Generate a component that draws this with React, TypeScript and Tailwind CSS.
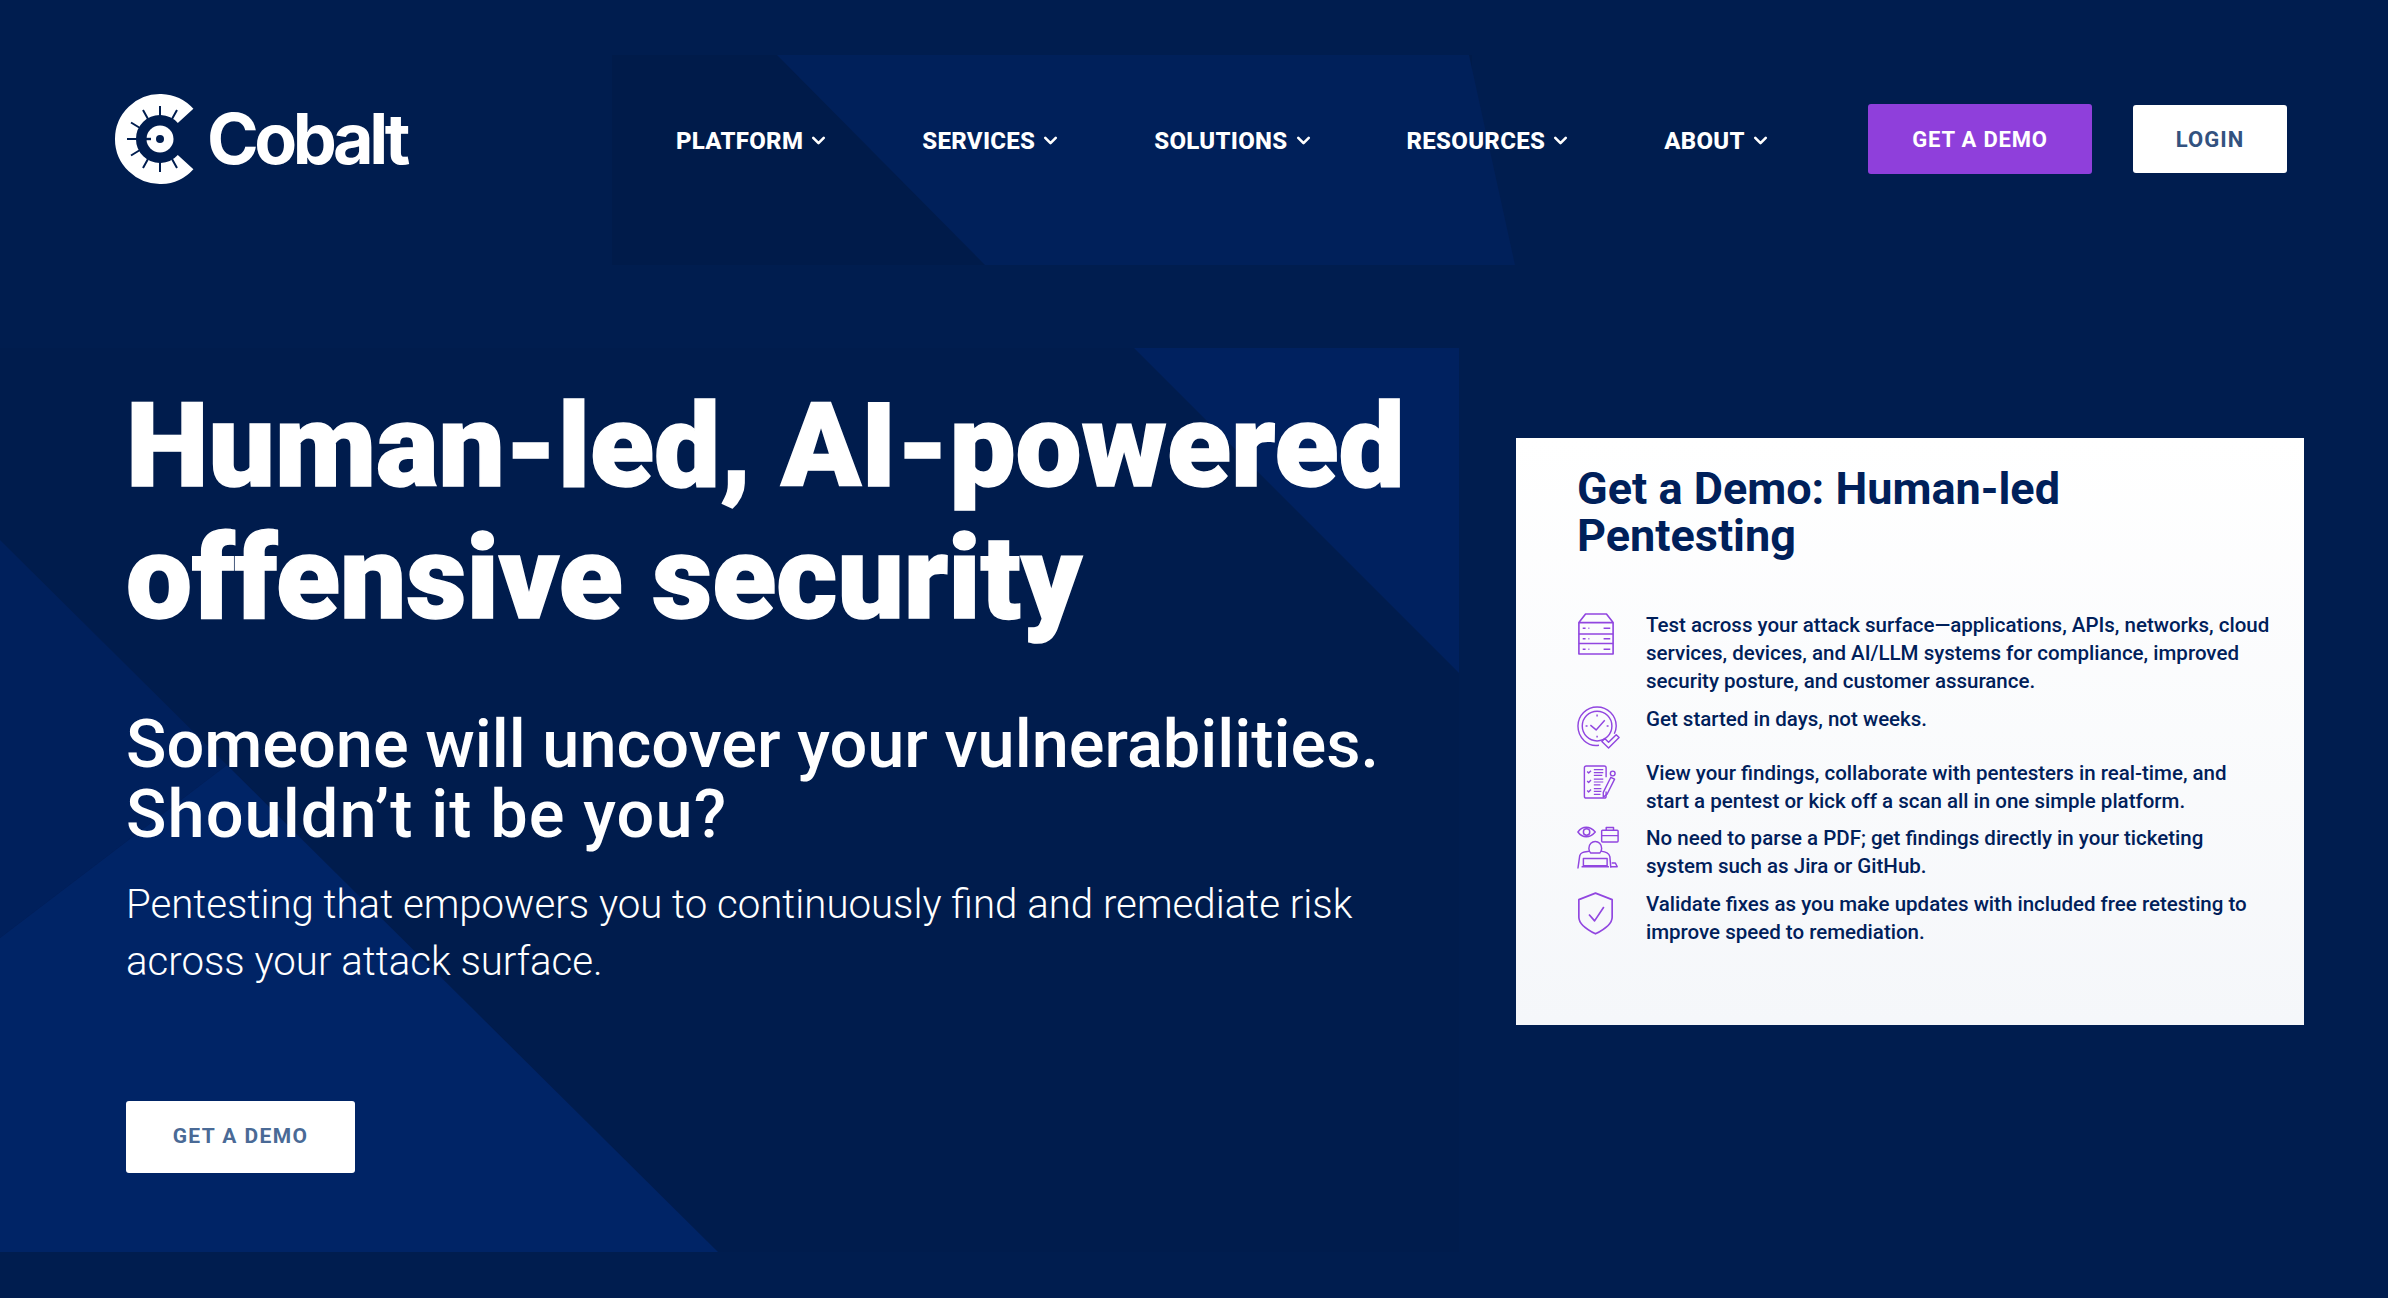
import { ChevronDown } from "lucide-react";

const navItems = ["PLATFORM", "SERVICES", "SOLUTIONS", "RESOURCES", "ABOUT"];

const Logo = () => (
  <svg width="92" height="92" viewBox="0 0 92 92" className="shrink-0">
    <path d="M71.600 22.900A34.500 34.500 0 1 0 71.600 69.100" fill="none" stroke="#fff" strokeWidth="21" />
    <path
      d="M46 24V13M58 26L63 17M34 26L29 17M26 35L17 29.500M24 46H13M26 57L17 62.500M34 66L29 75M46 68V79M58 66L63 75"
      stroke="#001d4f"
      strokeWidth="2"
    />
    <circle cx="46" cy="46" r="13.500" fill="#fff" />
    <circle cx="46" cy="46" r="4" fill="#001d4f" />
    <path d="M32 46H37" stroke="#001d4f" strokeWidth="2.400" />
  </svg>
);

const ServerIcon = () => (
  <svg width="38" height="44" viewBox="0 0 40 46" fill="none" stroke="#9146e0" strokeWidth="1.700" strokeLinejoin="round">
    <path d="M2 11L9 2H31L38 11V44H2Z" />
    <path d="M2 11H38M2 23H38M2 33H38" />
    <path d="M6 17H9M12 17H13M6 28H9M12 28H13M6 39H9M12 39H13M28 17H35M28 28H35M28 39H35" />
  </svg>
);

const ClockIcon = () => (
  <svg width="44" height="44" viewBox="0 0 46 46" fill="none" stroke="#9146e0" strokeWidth="1.500" strokeLinejoin="round">
    <path d="M23 41C11 43 1 33 1 21A20 20 0 0 1 41 21C41 24 40 27 39 29" />
    <circle cx="21" cy="21" r="15.500" />
    <path d="M21 9V11M21 31V33M9 21H11M31 21H33M14 20L20 25L29 15" />
    <path d="M26 37L29 34L33 38L41 30L44 33L33 44Z" />
  </svg>
);

const ChecklistIcon = () => (
  <svg width="33" height="34" viewBox="0 0 34 36" fill="none" stroke="#9146e0" strokeWidth="1.500" strokeLinejoin="round">
    <path d="M24 13V3A2 2 0 0 0 22 1H3A2 2 0 0 0 1 3V33A2 2 0 0 0 3 35H22A2 2 0 0 0 24 33V28" />
    <path d="M4 7L5.500 8.500L8 6M4 17L5.500 18.500L8 16M4 27L5.500 28.500L8 26" />
    <path d="M11 5H21M11 8H21M11 11H20M11 15H21M11 18H21M11 21H18M11 25H19M11 28H19M11 31H18" strokeWidth="1.300" />
    <path d="M21 29L29 13L33 15L25 31L21 34Z" />
    <circle cx="31" cy="9" r="2.500" />
  </svg>
);

const AnalystIcon = () => (
  <svg width="42" height="45" viewBox="0 0 46 48" fill="none" stroke="#9146e0" strokeWidth="1.600" strokeLinejoin="round">
    <path d="M1 7C6 0 14 0 20 7C14 14 6 14 1 7Z" />
    <circle cx="10.500" cy="7" r="3.500" />
    <rect x="27" y="5" width="18" height="13" rx="1" />
    <path d="M32 5V2H40V5M27 11H45" />
    <path d="M13 25C13 15 27 15 27 25C27 28 26 29 25 30H15C14 29 13 28 13 25Z" />
    <path d="M1 47L3 33C4 29 8 29 14 28M26 28C32 29 35 30 36 34L37 46" />
    <path d="M7 36H33V44H7ZM5 45H35" />
    <path d="M37 45H44L42 41H38" />
  </svg>
);

const ShieldIcon = () => (
  <svg width="37" height="43" viewBox="0 0 40 46" fill="none" stroke="#9146e0" strokeWidth="1.800" strokeLinejoin="round">
    <path d="M20 1L38 8V27C38 35 28 41 20 45C12 41 2 35 2 27V8Z" />
    <path d="M13 24L19 31L29 16" />
  </svg>
);

const features = [
  { icon: <ServerIcon />, iconClass: "pt-[1px]", boxClass: "h-[94px]", text: "Test across your attack surface\u2014applications, APIs, networks, cloud services, devices, and AI/LLM systems for compliance, improved security posture, and customer assurance." },
  { icon: <ClockIcon />, iconClass: "pt-[1px]", boxClass: "h-[54px]", text: "Get started in days, not weeks." },
  { icon: <ChecklistIcon />, iconClass: "pt-[6px] pl-[6px]", boxClass: "h-[65px]", text: "View your findings, collaborate with pentesters in real-time, and start a pentest or kick off a scan all in one simple platform." },
  { icon: <AnalystIcon />, iconClass: "pt-[1px]", boxClass: "h-[66px]", text: "No need to parse a PDF; get findings directly in your ticketing system such as Jira or GitHub." },
  { icon: <ShieldIcon />, iconClass: "pt-[2px]", boxClass: "h-[56px]", text: "Validate fixes as you make updates with included free retesting to improve speed to remediation." },
];

const Background = () => (
  <div className="absolute inset-0 overflow-hidden">
    <svg width="2388" height="1298" viewBox="0 0 2388 1298">
      <rect x="612" y="55" width="860" height="210" fill="#001b4a" />
      <path d="M777 55H1469L1515 265H985Z" fill="#00205a" />
      <path d="M0 348H1459V1252H0Z" fill="#001c4d" />
      <path d="M1134 348H1459V673Z" fill="#00215f" />
      <path d="M0 540L227 765L0 938Z" fill="#00205c" />
      <path d="M0 938L227 765L718 1252H0Z" fill="#002466" />
    </svg>
  </div>
);

export default function App() {
  return (
    <div className="relative h-[1298px] w-[2388px] overflow-hidden bg-[#001d4f] font-['Roboto',sans-serif]">
      <Background />
      <div className="relative">
        <header className="flex h-[278px] items-center pl-[114px] pr-[101px]">
          <div className="flex w-[562px] items-center gap-[1px]">
            <Logo />
            <span className="font-['Inter',sans-serif] text-[70px] font-bold leading-none tracking-[-4.500px] text-white">Cobalt</span>
          </div>
          <nav className="mt-[3px] flex flex-1 items-center gap-[93px]">
            {navItems.map((item) => (
              <a key={item} className="flex items-center gap-[5px] text-[24px] font-extrabold tracking-[0.300px] text-white">
                {item}
                <ChevronDown size={21} strokeWidth={3} />
              </a>
            ))}
          </nav>
          <button className="flex h-[70px] w-[224px] items-center justify-center rounded-[3px] bg-[#8f3fdb] text-[22px] font-bold tracking-[0.800px] text-white">GET A DEMO</button>
          <button className="ml-[41px] flex h-[68px] w-[154px] items-center justify-center rounded-[3px] bg-white text-[22px] font-bold tracking-[1px] text-[#33527f]">LOGIN</button>
        </header>
        <main className="flex items-start pl-[126px] pr-[84px]">
          <div className="w-[1390px] pt-[102px]">
            <h1 className="text-[117.500px] font-black leading-[132px] text-white [-webkit-text-stroke:1.500px_white]">Human-led, AI-powered offensive security</h1>
            <h2 className="mt-[66px] text-[66.700px] font-medium leading-[69.500px] text-white">
              Someone will uncover your vulnerabilities.<br />
              <span className="tracking-[1.100px]">Shouldn’t it be you?</span>
            </h2>
            <p className="mt-[27px] text-[40.200px] font-light leading-[57px] text-white">Pentesting that empowers you to continuously find and remediate risk<br />across your attack surface.</p>
            <button className="mt-[111px] flex h-[72px] w-[229px] items-center justify-center rounded-[3px] bg-white text-[21px] font-bold tracking-[1.400px] text-[#4a6a96]">GET A DEMO</button>
          </div>
          <aside className="mt-[160px] h-[587px] w-[788px] bg-gradient-to-b from-[#ffffff] to-[#f5f7fa] pl-[61px] pr-[34px] pt-[27px]">
            <h3 className="text-[45px] font-bold leading-[47px] text-[#00205a]">Get a Demo: Human-led Pentesting</h3>
            <ul className="mt-[52px]">
              {features.map((f, i) => (
                <li key={i} className={`flex ${f.boxClass}`}>
                  <div className={`w-[69px] shrink-0 ${f.iconClass}`}>{f.icon}</div>
                  <p className="text-[20.500px] font-medium leading-[28px] text-[#00205a]">{f.text}</p>
                </li>
              ))}
            </ul>
          </aside>
        </main>
      </div>
    </div>
  );
}
